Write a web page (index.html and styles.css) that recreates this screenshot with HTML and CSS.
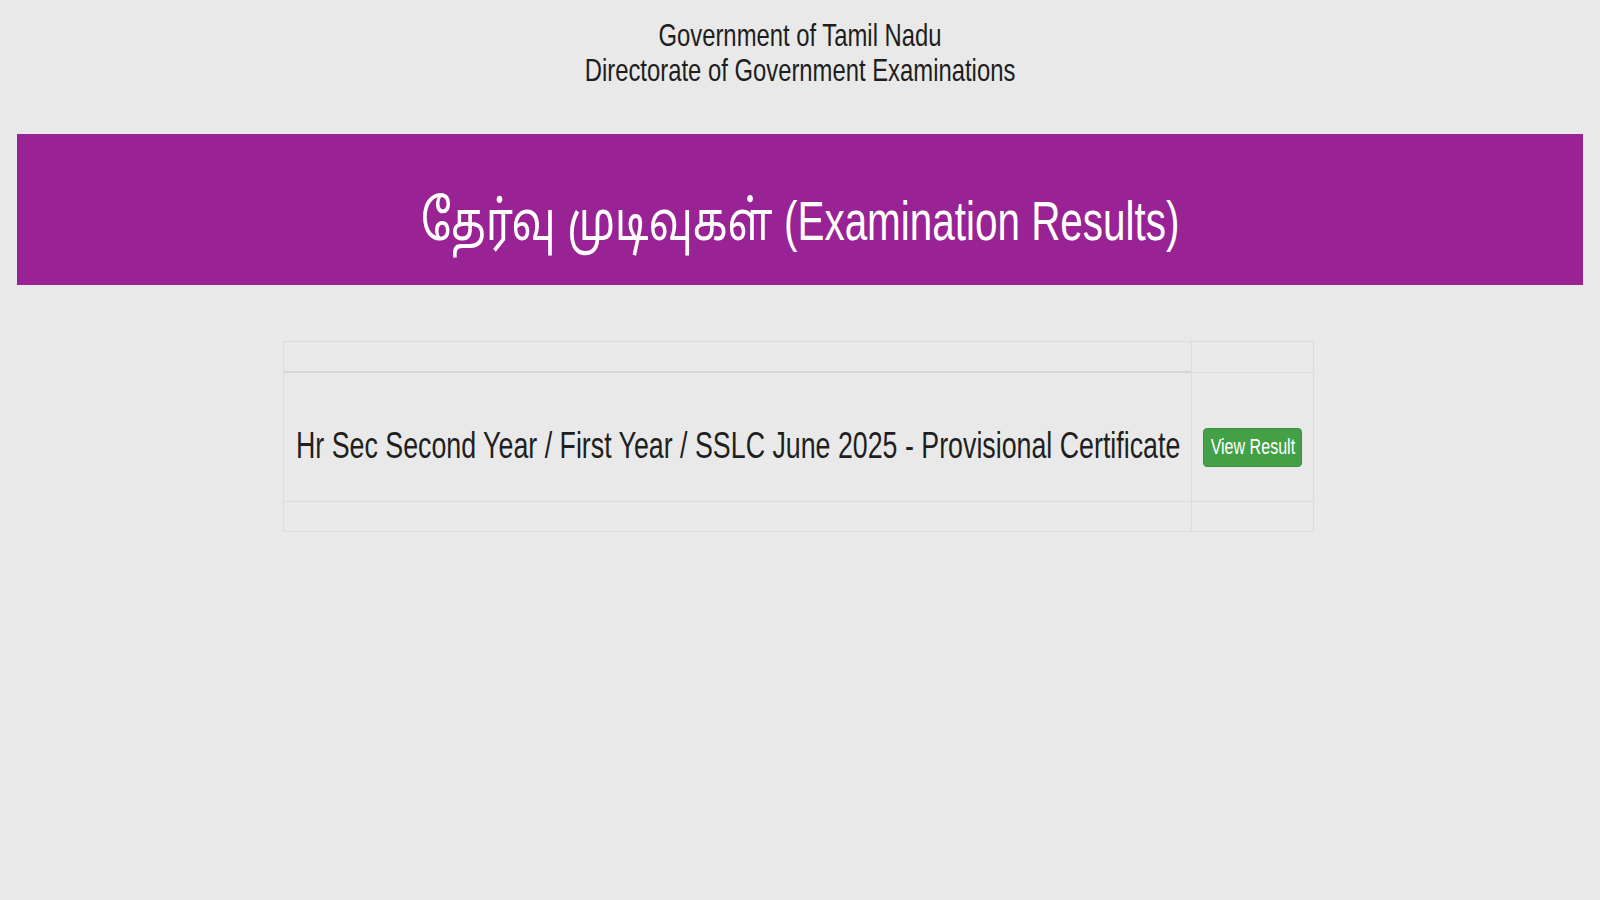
FILE: index.html
```html
<!DOCTYPE html>
<html lang="ta">
<head>
<meta charset="utf-8">
<title>தேர்வு முடிவுகள் (Examination Results)</title>
<link rel="stylesheet" href="styles.css">
</head>
<body>
  <header class="masthead">
    <div class="masthead-line"><span class="squeeze">Government of Tamil Nadu</span></div>
    <div class="masthead-line"><span class="squeeze">Directorate of Government Examinations</span></div>
  </header>

  <section class="banner">
    <h1 class="banner-title"><span class="squeeze banner-text"><span class="tamil">தேர்வு முடிவுகள்</span> (Examination Results)</span></h1>
  </section>

  <main class="results">
    <div class="row row-head">
      <div class="cell cell-main"></div>
      <div class="cell cell-side"></div>
    </div>
    <div class="row row-item">
      <div class="cell cell-main item-title"><span class="squeeze squeeze-left">Hr Sec Second Year / First Year / SSLC June 2025 - Provisional Certificate</span></div>
      <div class="cell cell-side item-action">
        <a class="btn-result" href="#"><span class="squeeze">View Result</span></a>
      </div>
    </div>
    <div class="row row-foot">
      <div class="cell cell-main"></div>
      <div class="cell cell-side"></div>
    </div>
  </main>
</body>
</html>
```

FILE: styles.css
```css
* { box-sizing: border-box; }

html, body {
  margin: 0;
  padding: 0;
  background: #e9e9e9;
}

body {
  font-family: "Liberation Sans", Arial, sans-serif;
  color: #222222;
}

.squeeze {
  display: inline-block;
  white-space: nowrap;
  transform-origin: center center;
}

.squeeze-left {
  transform-origin: left center;
}

/* Header */
.masthead {
  padding-top: 18px;
  text-align: center;
}

.masthead-line {
  font-size: 32px;
  line-height: 35px;
  color: #1e1e1e;
}

.masthead-line .squeeze {
  transform: scaleX(0.745);
}

/* Banner */
.banner {
  margin: 46px 17px 0;
  height: 151px;
  background: #992294;
  display: flex;
  justify-content: center;
  padding-top: 60px;
}

.banner-title {
  margin: 0;
  font-weight: normal;
  font-size: 55px;
  line-height: 55px;
  color: #ffffff;
  white-space: nowrap;
  font-family: "Liberation Sans", "Latha", "Nirmala UI", "Noto Sans Tamil", "Lohit Tamil", "Noto Sans", sans-serif;
}

.banner-text {
  transform: scaleX(0.735);
}

.tamil {
  display: inline-block;
  transform: scaleX(1.043);
  transform-origin: left center;
  margin-right: 20px;
}

/* Results table */
.results {
  width: 1031px;
  margin: 56px 0 0 calc(50% - 517px);
  border: 1px solid #dcdcdc;
}

.row {
  display: flex;
}

.cell-main {
  width: 908px;
  border-right: 1px solid #dcdcdc;
}

.cell-side {
  flex: 1;
}

.row-head {
  height: 31px;
}

.row-head .cell-main {
  border-bottom: 2px solid #d6d6d6;
}

.row-head .cell-side {
  border-bottom: 1px solid #dcdcdc;
}

.row-item {
  height: 129px;
}

.row-item .cell {
  border-bottom: 1px solid #dcdcdc;
}

.row-foot {
  height: 29px;
}

.item-title {
  padding: 55px 0 0 12px;
  font-size: 36px;
  line-height: 36px;
  color: #1f1f1f;
}

.item-title .squeeze {
  transform: scaleX(0.744);
}

.item-action {
  padding: 55px 0 0 11px;
}

.btn-result {
  display: flex;
  justify-content: center;
  width: 99px;
  height: 39px;
  border: 1px solid #3c8f3f;
  border-radius: 4px;
  background: #44a047;
  color: #ffffff;
  text-decoration: none;
  font-size: 22px;
  line-height: 35px;
  padding-bottom: 2px;
}

.btn-result .squeeze {
  flex: none;
  transform: scaleX(0.73);
}
```
